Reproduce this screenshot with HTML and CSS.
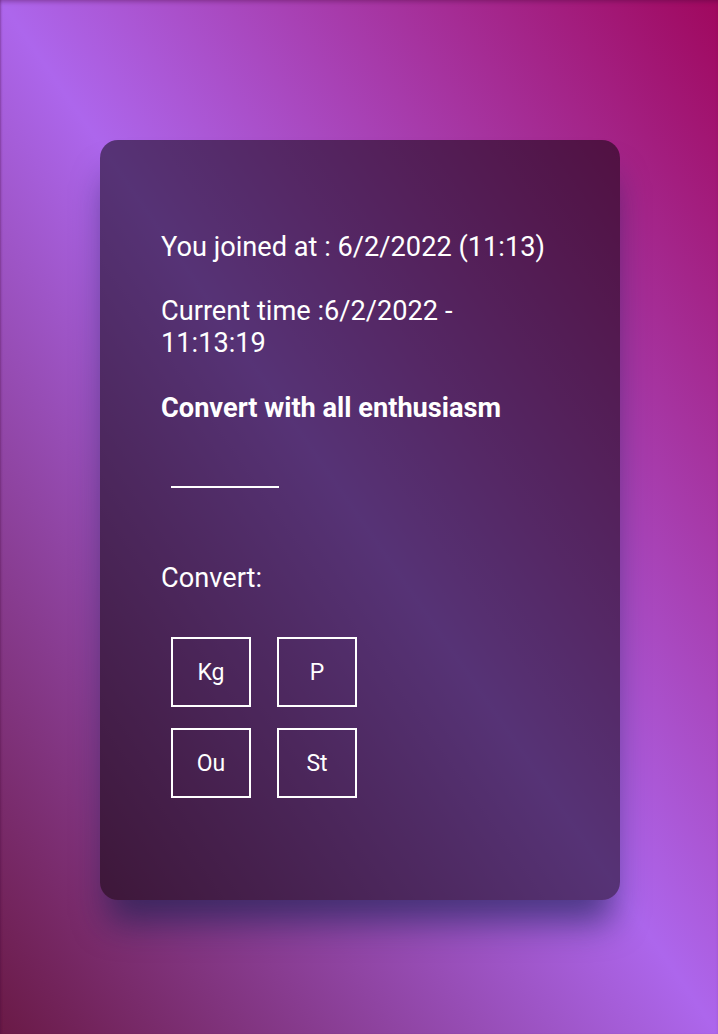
FILE: index.html
```html
<!DOCTYPE html>
<html lang="en">
<head>
<meta charset="utf-8">
<title>Converter</title>
<link rel="stylesheet" href="styles.css">
</head>
<body>
<div class="screen">
  <main class="card">
    <p class="line">You joined at : 6/2/2022 (11:13)</p>
    <p class="line">Current time :6/2/2022 - 11:13:19</p>
    <h3 class="title">Convert with all enthusiasm</h3>
    <input class="amount" type="text" aria-label="amount">
    <p class="line convert-label">Convert:</p>
    <div class="units">
      <button class="unit">Kg</button>
      <button class="unit">P</button>
      <button class="unit">Ou</button>
      <button class="unit">St</button>
    </div>
  </main>
</div>
</body>
</html>
```

FILE: styles.css
```css
html {
  height: 100%;
  background: linear-gradient(to top right, #6a1a46 0%, #ad66ec 50%, #a0085e 100%);
}

body {
  margin: 0;
  min-height: 100%;
  font-family: Roboto, "Liberation Sans", sans-serif;
  color: #ffffff;
}

.screen {
  min-height: 1034px;
  box-sizing: border-box;
  padding-top: 140px;
  box-shadow: inset 0 4px 4px -2px rgba(70, 10, 60, 0.35), inset 2px 0 2px -1px rgba(70, 10, 60, 0.3);
}

.card {
  box-sizing: border-box;
  width: 520px;
  height: 760px;
  margin-left: 100px;
  padding: 91px 61px 0;
  border-radius: 18px;
  background: rgba(0, 0, 0, 0.5);
  box-shadow: 0 30px 34px -8px rgba(15, 30, 75, 0.6);
  display: flex;
  flex-direction: column;
  align-items: flex-start;
}

.line {
  margin: 0 0 32px;
  font-size: 27.2px;
  line-height: 32px;
  font-weight: 400;
}

.title {
  margin: 1px 0 0;
  font-size: 27.2px;
  line-height: 32px;
  font-weight: 700;
}

.amount {
  box-sizing: border-box;
  margin: 34px 0 0 10px;
  width: 108px;
  height: 30px;
  padding: 0;
  border: none;
  border-bottom: 2px solid #ffffff;
  background: transparent;
  color: #ffffff;
  font: inherit;
  outline: none;
}

.convert-label {
  margin: 74px 0 0;
}

.units {
  margin: 43px 0 0 10px;
  display: grid;
  grid-template-columns: 80px 80px;
  grid-auto-rows: 70px;
  column-gap: 26px;
  row-gap: 21px;
}

.unit {
  box-sizing: border-box;
  border: 2px solid #ffffff;
  background: transparent;
  color: #ffffff;
  font-family: Roboto, "Liberation Sans", sans-serif;
  font-size: 23px;
  padding: 0;
}
```
